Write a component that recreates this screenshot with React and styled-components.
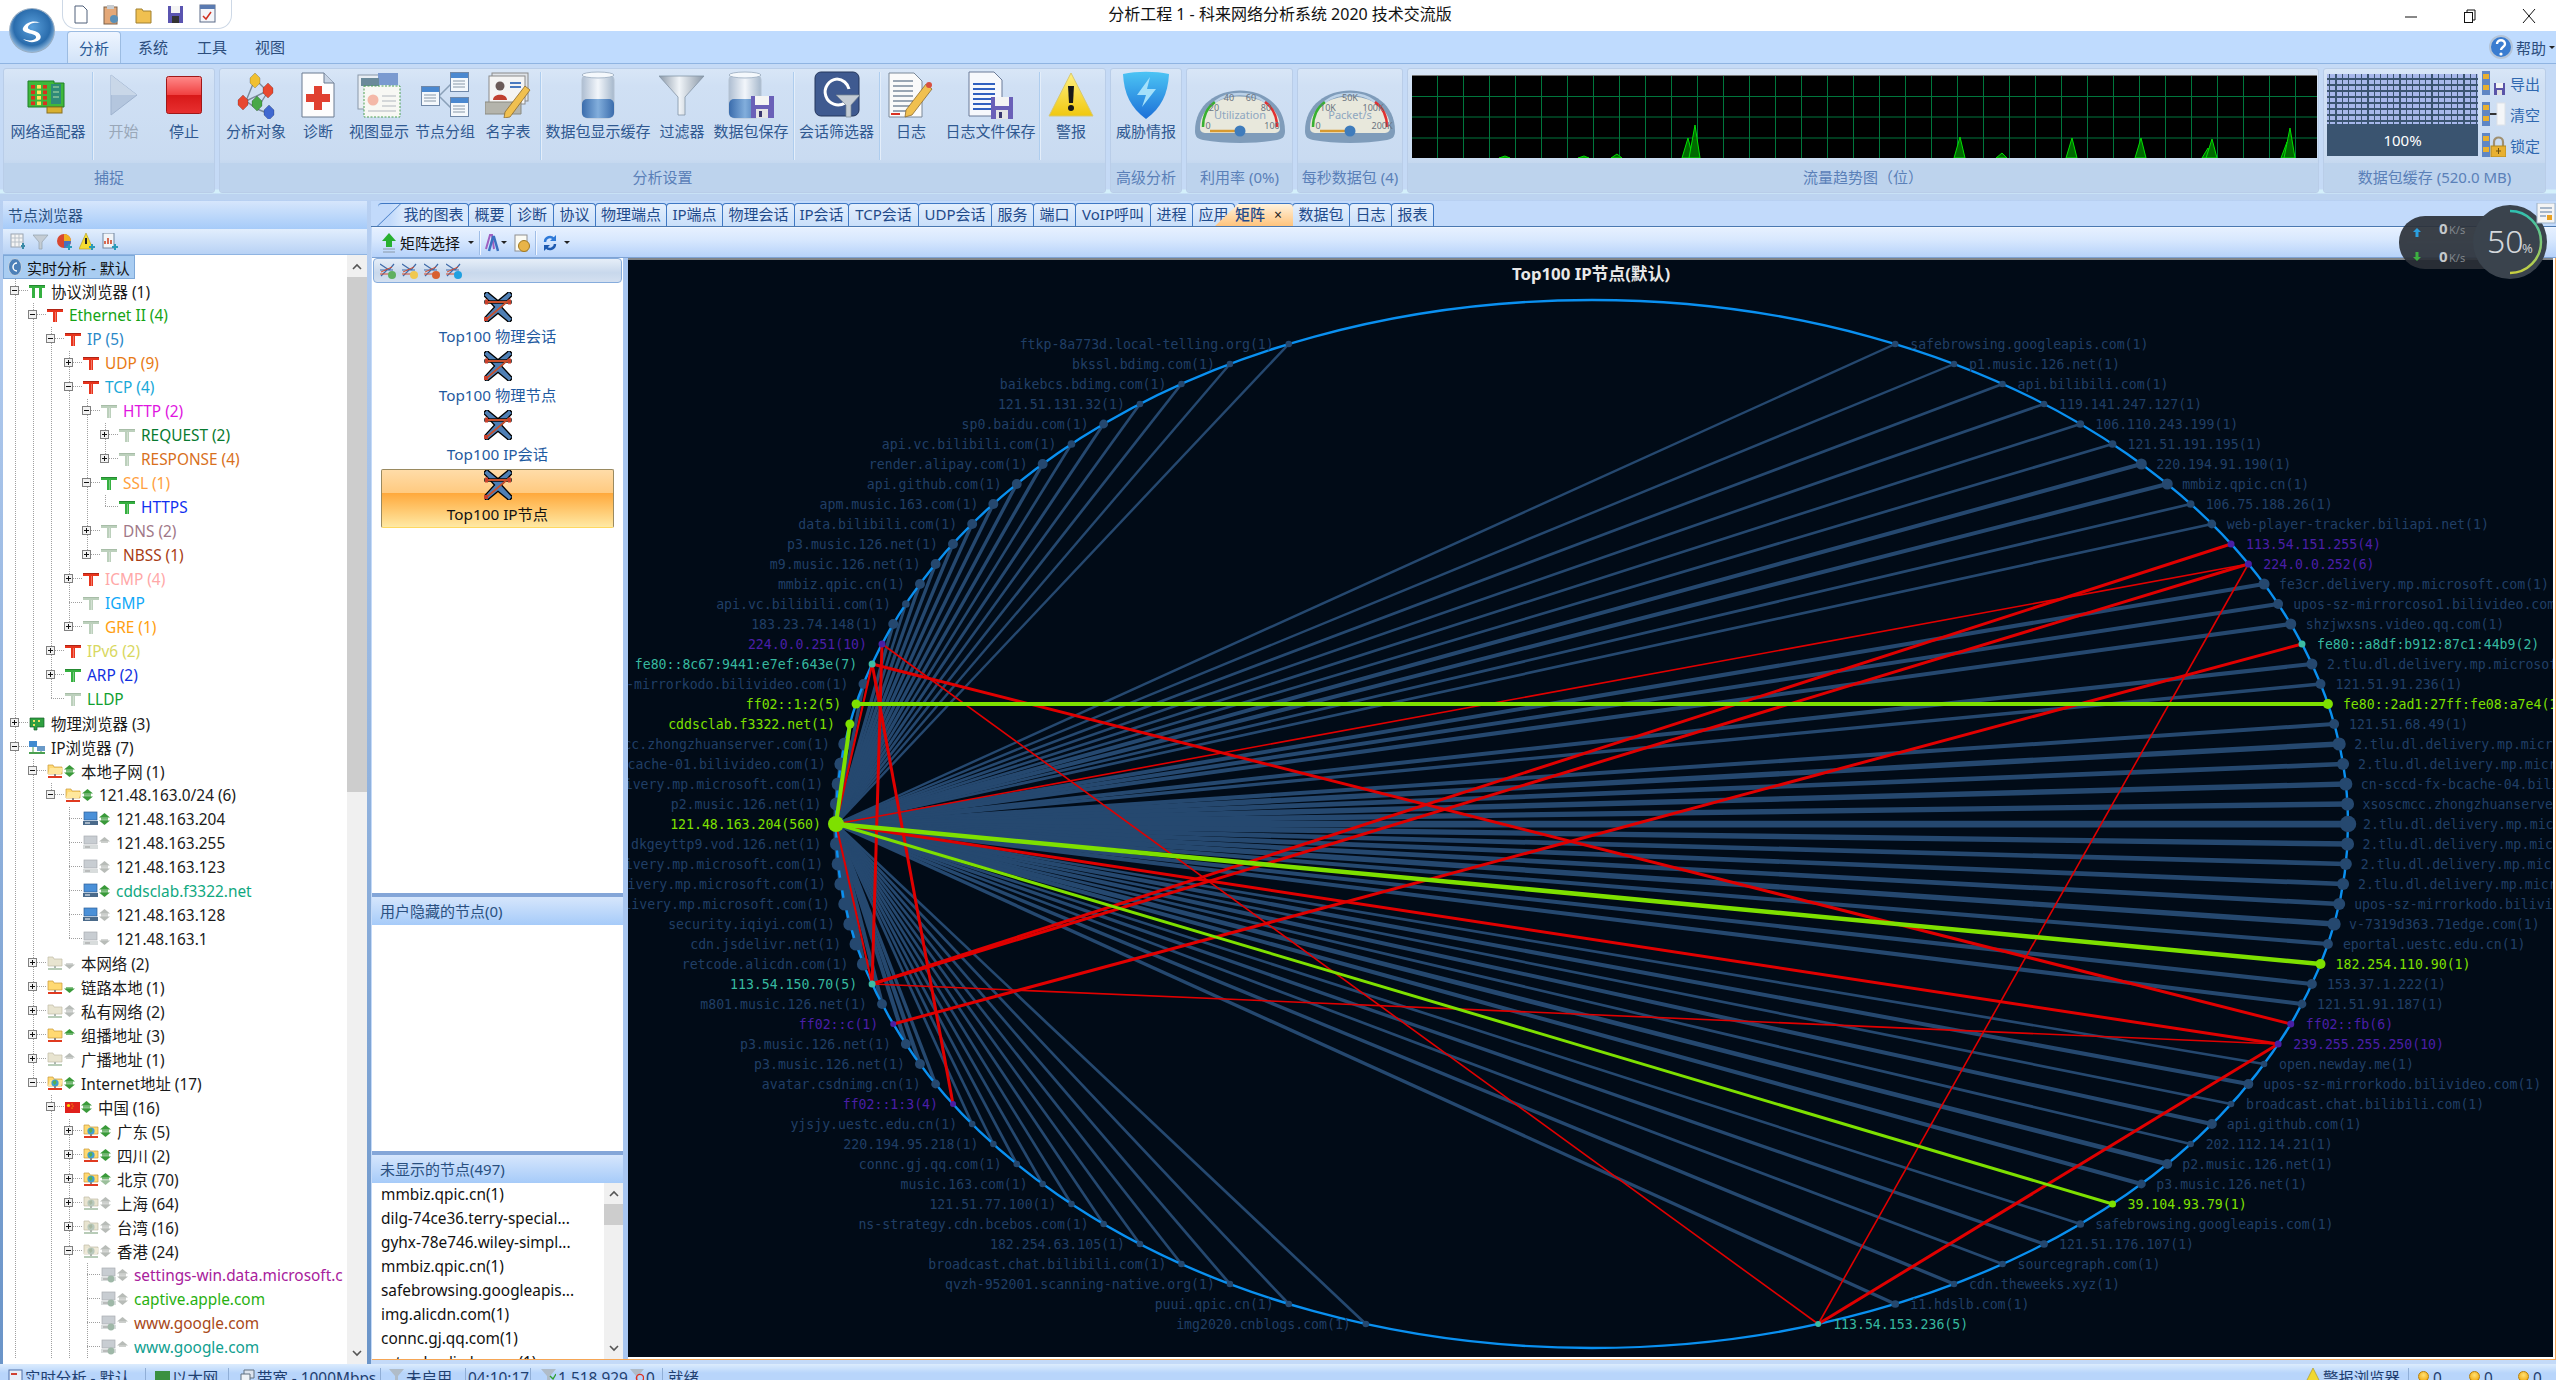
import React from 'react';
import styled, { createGlobalStyle } from 'styled-components';

const UI_FONT = '"Noto Sans", "Noto Sans CJK SC", sans-serif';

const GlobalStyle = createGlobalStyle`
  html, body { margin: 0; padding: 0; background: #bfdbfe; overflow: hidden; }
  * { box-sizing: border-box; }
`;

/* ---------- small drawn icons ---------- */

const IconSvg = styled.svg`
  display: block;
  flex: none;
`;

const Svg = ({ w, h, children }) => (
  <IconSvg width={w} height={h} viewBox={`0 0 ${w} ${h}`}>
    {children}
  </IconSvg>
);

const PipeIcon = ({ c = '#e8341c', s = '#8a1a10', double }) => (
  <Svg w={16} h={15}>
    <rect x="0" y="1" width="16" height="3" fill={c} />
    <rect x="0" y="1" width="16" height="1" fill={s} opacity="0.6" />
    {double ? (
      <>
        <rect x="3" y="4" width="3" height="10" fill={c} />
        <rect x="10" y="4" width="3" height="10" fill={c} />
      </>
    ) : (
      <rect x="6" y="4" width="4" height="10" fill={c} />
    )}
    <rect x="8" y="4" width="1" height="10" fill="#fff" opacity="0.35" />
  </Svg>
);

const FolderIcon = ({ net, dim, open }) => (
  <Svg w={16} h={16}>
    <path d="M1 2h5l1 2h8v7H1z" fill={dim ? '#e8e4d0' : '#ffd972'} stroke={dim ? '#c0bca8' : '#c99a38'} strokeWidth="0.7" />
    {open && <path d="M3 5h13l-2 6H1z" fill={dim ? '#efe9d8' : '#ffe79c'} />}
    {net && <circle cx="8" cy="8" r="3.6" fill={dim ? '#b8c8bc' : '#3f9fd0'} />}
    {net && <path d="M5.5 7l3-2 1 3-2 2z" fill={dim ? '#a8b8a0' : '#58b048'} />}
    <rect x="7" y="11" width="2" height="2" fill={dim ? '#b0b8b0' : '#888'} />
    <rect x="1" y="13" width="14" height="2" fill={dim ? '#b8ccb8' : '#e03a20'} />
  </Svg>
);

const PcIcon = ({ dim, globe }) => (
  <Svg w={15} h={16}>
    <rect x="1" y="1" width="13" height="8" fill={dim ? '#c8cdd2' : '#4a90d8'} stroke={dim ? '#a8adb2' : '#2c5f98'} strokeWidth="0.7" />
    <rect x="0" y="10" width="15" height="4" fill={dim ? '#d8dcdc' : '#4a6a8a'} />
    <rect x="2" y="11.5" width="5" height="1" fill={dim ? '#999' : '#fff'} />
    {globe && <circle cx="10" cy="12" r="3.4" fill="#9fb8a8" />}
  </Svg>
);

const Arrows = ({ up = 'none', down = 'none' }) => (
  <Svg w={11} h={14}>
    {up !== 'none' && <path d="M5.5 1L11 5.5H0z" fill={up} />}
    {up !== 'none' && <rect x="2" y="5.5" width="7" height="1.2" fill={up} />}
    {down !== 'none' && <rect x="2" y="7.4" width="7" height="1.2" fill={down} />}
    {down !== 'none' && <path d="M5.5 13L11 8.6H0z" fill={down} />}
  </Svg>
);

const CnFlag = () => (
  <Svg w={15} h={11}>
    <rect width="15" height="11" fill="#e0201c" />
    <circle cx="3.5" cy="3.5" r="1.6" fill="#ffd800" />
    <circle cx="7" cy="2" r="0.6" fill="#ffd800" />
    <circle cx="8" cy="4" r="0.6" fill="#ffd800" />
    <circle cx="7" cy="6" r="0.6" fill="#ffd800" />
  </Svg>
);

const AdapterIcon = () => (
  <Svg w={44} h={48}>
    <path d="M2 10h26v2h10v24H2z" fill="#3fb83a" stroke="#1f7f28" />
    {[0, 1, 2, 3].map((r) =>
      [0, 1, 2].map((c) => (
        <rect key={`${r}${c}`} x={5 + c * 6} y={14 + r * 5.5} width="4" height="3.6" fill={c === 1 ? '#ffe25a' : '#d8321e'} />
      ))
    )}
    <rect x="25" y="13" width="10" height="20" fill="#2f8a78" />
    <path d="M27 16h6M27 21h6M27 26h6" stroke="#b8e0a8" />
    <rect x="21" y="36" width="15" height="6" fill="#d8b030" stroke="#8a7020" />
  </Svg>
);

const PlayIcon = () => (
  <Svg w={30} h={44}>
    <path d="M2 2l26 20L2 42z" fill="#b4c6de" stroke="#9fb3cf" />
    <path d="M2 2l26 20L2 22z" fill="#c9d7e8" />
  </Svg>
);

const StopIcon = () => (
  <Svg w={36} h={38}>
    <defs>
      <linearGradient id="stopg" x1="0" y1="0" x2="0" y2="1">
        <stop offset="0" stopColor="#ff8a8a" />
        <stop offset="0.5" stopColor="#f04040" />
        <stop offset="0.5" stopColor="#d81818" />
        <stop offset="1" stopColor="#e83030" />
      </linearGradient>
    </defs>
    <rect x="0.5" y="0.5" width="35" height="37" rx="2" fill="url(#stopg)" stroke="#a01818" />
  </Svg>
);

const Diamond = ({ x, y, c }) => (
  <path d={`M${x} ${y - 7}l5 5v5l-5 5-5-5v-5z`} fill={c} stroke="#0005" strokeWidth="0.6" />
);

const MoleculeIcon = () => (
  <Svg w={46} h={48}>
    <path d="M22 8L13 30M22 8l12 12M34 20L13 30M13 30l11 8M24 38l10-16M24 38l10 4" stroke="#7a8a9a" strokeWidth="1.4" fill="none" />
    <Diamond x={22} y={9} c="#f0c030" />
    <Diamond x={35} y={19} c="#e84830" />
    <Diamond x={10} y={31} c="#e84830" />
    <Diamond x={24} y={32} c="#48a848" />
    <Diamond x={36} y={41} c="#4068d0" />
  </Svg>
);

const DocCrossIcon = () => (
  <Svg w={36} h={46}>
    <path d="M2 1h22l10 10v34H2z" fill="#fdfdfd" stroke="#6a7a90" />
    <path d="M24 1v10h10" fill="#c8d4e4" stroke="#6a7a90" />
    <path d="M14 17h8v8h8v8h-8v8h-8v-8H6v-8h8z" transform="translate(0 -3)" fill="#e04030" />
  </Svg>
);

const ViewIcon = () => (
  <Svg w={46} h={46}>
    <rect x="2" y="3" width="32" height="34" fill="#e8eef4" stroke="#8a98a8" />
    <rect x="22" y="1" width="20" height="12" fill="#7a9ad0" />
    <rect x="5" y="6" width="18" height="8" fill="#6a8a9a" />
    <rect x="8" y="14" width="36" height="31" fill="#f8f8f4" stroke="#4aa050" strokeDasharray="2 1.5" />
    <circle cx="17" cy="28" r="5.5" fill="#f4b8a8" />
    <path d="M26 24h14M26 29h14M26 34h14M12 39h28" stroke="#c8ccd0" strokeWidth="1.5" />
  </Svg>
);

const NodeGroupIcon = () => (
  <Svg w={48} h={46}>
    <path d="M18 24L30 12M18 24L30 36" stroke="#8aa0b8" strokeWidth="1.5" />
    {[[0, 14], [29, 0], [29, 25]].map(([x, y]) => (
      <g key={x + y}>
        <rect x={x + 0.5} y={y + 0.5} width="18" height="19" fill="#f4f8fc" stroke="#7088a8" />
        <rect x={x + 1} y={y + 1} width="17" height="5" fill="#4a88d0" />
        <path d={`M${x + 3} ${y + 9}h12M${x + 3} ${y + 12}h12M${x + 3} ${y + 15}h12`} stroke="#8898a8" />
      </g>
    ))}
  </Svg>
);

const NameTableIcon = () => (
  <Svg w={46} h={46}>
    <rect x="7" y="1" width="36" height="28" fill="#dfe3e8" stroke="#8a8a8a" />
    <rect x="4" y="4" width="36" height="28" fill="#f4f4f4" stroke="#8a8a8a" />
    <circle cx="15" cy="14" r="4.5" fill="#6a5a58" />
    <path d="M8 28c0-7 14-7 14 0z" fill="#c04030" />
    <path d="M25 11h11M25 15h11" stroke="#4a7ac0" strokeWidth="2" />
    <path d="M0 30h36v12H0z" fill="#b4b4ac" stroke="#8a8a80" />
    <path d="M40 14l5 4-20 27-6 1 1-6z" fill="#f0c050" stroke="#8a6a30" strokeWidth="0.8" />
  </Svg>
);

const BeakerIcon = ({ save }) => {
  const x = save ? 2 : 8;
  const id = save ? 'beaks' : 'beakg';
  return (
    <Svg w={48} h={48}>
      <defs>
        <linearGradient id={id} x1="0" y1="0" x2="1" y2="0">
          <stop offset="0" stopColor="#aebed2" />
          <stop offset="0.5" stopColor="#f2f6fb" />
          <stop offset="1" stopColor="#a6b8cc" />
        </linearGradient>
        <linearGradient id={`${id}w`} x1="0" y1="0" x2="1" y2="0">
          <stop offset="0" stopColor="#3a6cac" />
          <stop offset="0.5" stopColor="#82aedc" />
          <stop offset="1" stopColor="#3a6cac" />
        </linearGradient>
      </defs>
      <rect x={x} y="3" width="32" height="44" rx="6" fill={`url(#${id})`} stroke="#b4c2d2" />
      <rect x={x} y="28" width="32" height="19" rx="5" fill={`url(#${id}w)`} />
      <ellipse cx={x + 16} cy="4" rx="16" ry="3" fill="#f4f8fc" stroke="#a8b8ca" />
      {save && (
        <g>
          <rect x="24" y="25" width="23" height="22" fill="#6a60b8" />
          <rect x="28" y="25" width="14" height="9" fill="#f4f4f4" />
          <rect x="29" y="38" width="12" height="9" fill="#e4e4e4" />
          <rect x="32" y="40" width="3" height="6" fill="#3a3870" />
        </g>
      )}
    </Svg>
  );
};

const FunnelIcon = () => (
  <Svg w={46} h={44}>
    <defs>
      <linearGradient id="fung" x1="0" y1="0" x2="1" y2="0">
        <stop offset="0" stopColor="#8a98a8" />
        <stop offset="0.45" stopColor="#f0f4f8" />
        <stop offset="1" stopColor="#8a98a8" />
      </linearGradient>
    </defs>
    <path d="M0 3h45L26 24v18h-7V24z" fill="url(#fung)" stroke="#8494a6" strokeWidth="0.8" />
  </Svg>
);

const SessionFilterIcon = () => (
  <Svg w={46} h={48}>
    <rect x="1" y="1" width="44" height="44" rx="6" fill="#3f5a90" stroke="#24365c" />
    <path d="M23 8a13 13 0 1 0 8 24" fill="none" stroke="#fff" strokeWidth="3" />
    <path d="M23 8a13 13 0 0 1 12 10" fill="none" stroke="#fff" strokeWidth="3" />
    <path d="M22 24h24L37 34v12h-5V34z" fill="#c4ccd4" stroke="#7a8694" strokeWidth="0.7" />
  </Svg>
);

const LogIcon = () => (
  <Svg w={46} h={46}>
    <path d="M1 1h25l8 8v36H1z" fill="#fafafa" stroke="#7a8898" />
    {[9, 14, 19, 24, 29, 34, 39].map((y) => (
      <path key={y} d={`M5 ${y}h20`} stroke="#9aa6b4" strokeWidth="2" />
    ))}
    <rect x="3" y="41" width="9" height="2" fill="#d83020" />
    <path d="M38 12l6 5-20 26-7 2 1-7z" fill="#f0c050" stroke="#8a6a30" strokeWidth="0.8" />
    <circle cx="41" cy="13" r="3" fill="#d85040" />
  </Svg>
);

const LogSaveIcon = () => (
  <Svg w={46} h={48}>
    <path d="M1 1h25l8 8v36H1z" fill="#f6f8fc" stroke="#6a7a98" />
    {[13, 18, 23, 28, 33, 38].map((y) => (
      <path key={y} d={`M5 ${y}h22`} stroke="#3060c0" strokeWidth="2" />
    ))}
    <rect x="23" y="26" width="22" height="22" fill="#6a60b8" />
    <rect x="27" y="26" width="14" height="9" fill="#f4f4f4" />
    <rect x="28" y="39" width="12" height="9" fill="#e4e4e4" />
    <rect x="31" y="41" width="3" height="6" fill="#3a3870" />
  </Svg>
);

const WarnIcon = () => (
  <Svg w={46} h={46}>
    <defs>
      <linearGradient id="warng" x1="0" y1="0" x2="0" y2="1">
        <stop offset="0" stopColor="#fff080" />
        <stop offset="1" stopColor="#f0c810" />
      </linearGradient>
    </defs>
    <path d="M23 1l22 43H1z" fill="url(#warng)" stroke="#d8c870" />
    <path d="M20 14h6l-1 17h-4z" fill="#181818" />
    <circle cx="23" cy="36" r="3" fill="#181818" />
  </Svg>
);

const ShieldIcon = () => (
  <Svg w={48} h={48}>
    <defs>
      <linearGradient id="shg" x1="0" y1="0" x2="0" y2="1">
        <stop offset="0" stopColor="#4cc4f4" />
        <stop offset="1" stopColor="#1c70d8" />
      </linearGradient>
    </defs>
    <path d="M1 3c14-3 32-3 46 0-1 20-8 34-23 45C9 37 2 23 1 3z" fill="url(#shg)" />
    <path d="M28 6L15 24h9l-4 12 14-18h-9z" fill="#a4e0fa" />
  </Svg>
);

const TickText = styled.text`
  font: 9px ${UI_FONT};
  fill: #6a7480;
  text-anchor: middle;
`;

const GaugeTitle = styled.text`
  font: 11px ${UI_FONT};
  fill: #8ea6c0;
  text-anchor: middle;
`;

const Gauge = ({ ticks, title }) => (
  <Svg w={98} h={66}>
    <path d="M4 48C4 -6 94 -6 94 48c0 6-3 8-8 9-12 2-24 3-37 3s-26-1-37-3c-5-1-8-3-8-9z" fill="#7f9cba" />
    <path d="M9 45C9 3 89 3 89 45c0 4-3 5-6 5H15c-3 0-6-1-6-5z" fill="#e8e8dc" />
    <path d="M12 44C12 32 17 24 24 19" fill="none" stroke="#38b030" strokeWidth="2.5" />
    <path d="M24 19c6-5 14-8 25-8s19 3 25 8" fill="none" stroke="#bcd2e8" strokeWidth="2.5" />
    <path d="M74 19c7 5 12 13 12 25" fill="none" stroke="#e03030" strokeWidth="2.5" />
    {ticks.map(([t, x, y]) => (
      <TickText key={t} x={x} y={y}>{t}</TickText>
    ))}
    <GaugeTitle x="49" y="36">{title}</GaugeTitle>
    <path d="M19 48h30" stroke="#d89a30" strokeWidth="2.5" />
    <circle cx="49" cy="48" r="5.5" fill="#3f7cbc" />
  </Svg>
);

const MatrixIcon = () => (
  <Svg w={28} h={30}>
    <g fill="none" strokeLinecap="square">
      <path d="M3 3l11 9L25 3M3 27l11-9 11 9M3 3l22 24M25 3L3 27" stroke="#000" strokeWidth="6.5" />
      <path d="M3 3l11 9L25 3M3 27l11-9 11 9M3 3l22 24M25 3L3 27" stroke="#4f7fb4" strokeWidth="3.8" />
      <path d="M2 10h24" stroke="#000" strokeWidth="3.4" />
      <path d="M2 10h24M4 26L24 9" stroke="#c8502c" strokeWidth="1.8" />
    </g>
    <rect x="0" y="25" width="4" height="4" fill="#c8402c" />
    <rect x="1" y="7.5" width="3" height="5" fill="#c8402c" />
    <rect x="24" y="7.5" width="3" height="5" fill="#c8402c" />
  </Svg>
);

const MiniMatrix = ({ badge }) => (
  <Svg w={16} h={16}>
    <path d="M0 1l9 6 5-6M1 13l6-6M0 7h13" stroke="#3f6aa8" strokeWidth="1.2" fill="none" />
    <path d="M1 9l11-5M0 11h10" stroke="#d85030" strokeWidth="1" />
    <circle cx="12" cy="12" r="4" fill={badge} />
  </Svg>
);

const ToolIcon = ({ kind }) => (
  <Svg w={16} h={18}>
    {kind === 'grid' && (
      <g>
        <rect x="1" y="1" width="12" height="13" fill="#f4f4f4" stroke="#9aa4b0" />
        <path d="M1 5h12M1 9h12M5 1v13M9 1v13" stroke="#b8c0c8" />
        <path d="M11 12h4v2h-4zM12 10h2v6h-2z" fill="#3a8aa8" />
      </g>
    )}
    {kind === 'funnel' && <path d="M0 2h15L9 9v7H6V9z" fill="#c4ccd4" stroke="#94a0ac" strokeWidth="0.7" />}
    {kind === 'pie' && (
      <g>
        <circle cx="8" cy="8" r="7" fill="#d84830" />
        <path d="M8 8V1a7 7 0 0 1 7 7z" fill="#f0b020" />
        <path d="M8 8h7a7 7 0 0 1-7 7z" fill="#4870c0" />
        <path d="M10 13h6v2h-6zM12 11h2v6h-2z" fill="#2a9ab8" />
      </g>
    )}
    {kind === 'warn' && (
      <g>
        <path d="M7 0l7 16H0z" fill="#f4dc30" stroke="#b09820" strokeWidth="0.6" />
        <rect x="6" y="5" width="2" height="6" fill="#222" />
        <path d="M10 13h6v2h-6zM12 11h2v6h-2z" fill="#2a9ab8" />
      </g>
    )}
    {kind === 'report' && (
      <g>
        <rect x="1" y="0" width="11" height="15" fill="#f0f4f8" stroke="#7488a0" />
        <path d="M3 11V8M6 11V5M9 11V7" stroke="#d04828" strokeWidth="1.6" />
        <path d="M10 13h6v2h-6zM12 11h2v6h-2z" fill="#2a9ab8" />
      </g>
    )}
  </Svg>
);

const BufferActionIcon = ({ kind }) => (
  <Svg w={24} h={24}>
    <rect x="0" y="0" width="8" height="24" fill="#5f86c4" />
    <rect x="1" y="3" width="6" height="5" fill="#e8b030" />
    <rect x="1" y="14" width="6" height="5" fill="#e8b030" />
    {kind === 'save' && (
      <g>
        <rect x="12" y="12" width="11" height="12" fill="#5a54a8" />
        <rect x="14" y="12" width="7" height="5" fill="#f4f4f4" />
        <rect x="15" y="19" width="5" height="5" fill="#e0e0e0" />
      </g>
    )}
    {kind === 'clear' && (
      <g>
        <path d="M8 12h7" stroke="#333" strokeWidth="2" />
        <rect x="15" y="1" width="8" height="22" fill="#f4f6f8" stroke="#dde2e8" />
      </g>
    )}
    {kind === 'lock' && (
      <g>
        <path d="M12 13V9c0-6 9-6 9 0v4" fill="none" stroke="#a09070" strokeWidth="2.2" />
        <rect x="9" y="13" width="15" height="11" fill="#e8b030" stroke="#b08820" />
        <path d="M16.5 15v6M14 18h5" stroke="#6a5010" />
      </g>
    )}
  </Svg>
);

const Chevron = ({ down }) => (
  <Svg w={10} h={7}>
    <path d={down ? 'M1 1l4 4 4-4' : 'M1 6l4-4 4 4'} fill="none" stroke="#555" strokeWidth="1.6" />
  </Svg>
);

const Caret = styled.span`
  width: 0;
  height: 0;
  flex: none;
  border-left: 3px solid transparent;
  border-right: 3px solid transparent;
  border-top: 3px solid #222;
  margin: ${(p) => p.$m || '0'};
`;

/* ---------- title bar ---------- */

const Page = styled.div`
  position: relative;
  width: 2556px;
  height: 1380px;
  overflow: hidden;
  display: flex;
  flex-direction: column;
  background: #bfdbfe;
  font-family: ${UI_FONT};
  font-size: 15px;
`;

const TitleBar = styled.header`
  height: 31px;
  flex: none;
  background: #fff;
  display: flex;
  align-items: center;
`;

const QuickAccess = styled.div`
  margin-left: 62px;
  width: 170px;
  height: 29px;
  flex: none;
  align-self: flex-start;
  display: flex;
  align-items: center;
  gap: 15px;
  padding-left: 11px;
  border: 1px solid #cdd8e6;
  border-top: none;
  border-radius: 0 0 14px 14px;
`;

const TitleText = styled.div`
  flex: 1;
  padding-right: 68px;
  margin-top: -4px;
  text-align: center;
  font-size: 16px;
  line-height: 22px;
  color: #111;
`;

const WindowButtons = styled.div`
  width: 160px;
  flex: none;
  display: flex;
  align-items: center;
  justify-content: space-between;
  padding: 0 20px 0 8px;
`;

const LogoOrb = styled.div`
  position: absolute;
  left: 9px;
  top: 8px;
  width: 46px;
  height: 45px;
  border-radius: 50%;
  z-index: 3;
  display: flex;
  align-items: center;
  justify-content: center;
  background: radial-gradient(circle at 50% 42%, #5aa0dc 0, #2a6cac 55%, #8db6dc 74%, #eef4fa 100%);
  border: 1px solid #98aec4;
`;

/* ---------- ribbon ---------- */

const TabRow = styled.nav`
  height: 33px;
  flex: none;
  background: #bfdbfe;
  display: flex;
  align-items: flex-end;
  padding-left: 67px;
  border-bottom: 1px solid #8fb4e2;
`;

const RibbonTab = styled.div`
  width: ${(p) => p.$w}px;
  height: 32px;
  text-align: center;
  line-height: 32px;
  color: #2c4d7c;
  ${(p) =>
    p.$active &&
    `background: linear-gradient(#eef5ff, #d2e3f8);
     border: 1px solid #9cbce2;
     border-bottom: none;
     border-radius: 4px 4px 0 0;
     color: #2a5a96;`}
`;

const HelpBox = styled.div`
  margin-left: auto;
  align-self: center;
  display: flex;
  align-items: center;
  gap: 3px;
  color: #2c4d7c;
  padding-right: 1px;
`;

const Ribbon = styled.section`
  height: 136px;
  flex: none;
  padding: 4px 0 0 3px;
  display: flex;
  gap: 4px;
  background: linear-gradient(#c5daf6 0, #c5daf6 125px, #d4f0fb 126px, #d4f0fb 129px, #bcd3f0 130px);
`;

const RibbonGroup = styled.div`
  width: ${(p) => p.$w}px;
  height: 125px;
  flex: none;
  display: flex;
  flex-direction: column;
  border: 1px solid #b9cde8;
  border-radius: 3px;
  background: linear-gradient(#d8e6f7, #d0e0f4 14%, #c9dbf1 90px, #c4d7ef 95px);
`;

const GroupBody = styled.div`
  height: 94px;
  flex: none;
  display: flex;
  align-items: flex-start;
`;

const GroupLabel = styled.div`
  flex: 1;
  background: #bdd3ed;
  color: #5a80b8;
  text-align: center;
  line-height: 29px;
  border-radius: 0 0 3px 3px;
  white-space: nowrap;
`;

const RibbonItem = styled.div`
  width: ${(p) => p.$w}px;
  flex: none;
  height: 92px;
  padding-top: 2px;
  display: flex;
  flex-direction: column;
  align-items: center;
  color: ${(p) => (p.$off ? '#99a7b8' : '#2f5890')};
`;

const ItemIcon = styled.div`
  height: 48px;
  display: flex;
  align-items: center;
  justify-content: center;
`;

const ItemLabel = styled.div`
  margin-top: 1px;
  line-height: 22px;
  white-space: nowrap;
`;

const GaugeBox = styled.div`
  width: 100%;
  padding-top: 14px;
  display: flex;
  justify-content: center;
`;

const RibbonSep = styled.div`
  width: 1px;
  height: 88px;
  margin-top: 3px;
  flex: none;
  background: #aecdee;
  box-shadow: 1px 0 0 #e4eefa;
`;

const ChartBox = styled.div`
  margin: 6px 0 0 4px;
  border-top: 1px solid #777;
`;

const BufferWrap = styled.div`
  display: flex;
  padding: 5px 0 0 3px;
  gap: 4px;
`;

const BufferGrid = styled.div`
  width: 151px;
  height: 82px;
  display: flex;
  flex-direction: column;
  background: #3a5470;
`;

const BufferDots = styled.div`
  height: 50px;
  background:
    repeating-linear-gradient(90deg, transparent 0 2px, #3a5470 2px 3.2px, transparent 3.2px 6.4px),
    repeating-linear-gradient(#a7b7ea 0 4px, #3a5470 4px 6px);
`;

const BufferPct = styled.div`
  flex: 1;
  color: #fff;
  text-align: center;
  line-height: 32px;
`;

const BufferActions = styled.div`
  display: flex;
  flex-direction: column;
  gap: 7px;
  margin-top: -3px;
`;

const BufferAction = styled.div`
  display: flex;
  align-items: center;
  height: 24px;
  gap: 4px;
  color: #2f68b0;
`;

/* ---------- workspace ---------- */

const Workspace = styled.div`
  position: relative;
  height: 1164px;
  flex: none;
  display: flex;
  padding-left: 3px;
  padding-top: 1px;
  background: linear-gradient(#b8d0f2, #6a94c8);
`;

const LeftPanel = styled.aside`
  width: 364px;
  flex: none;
  display: flex;
  flex-direction: column;
  background: #fff;
`;

const PanelHeader = styled.div`
  height: 28px;
  flex: none;
  padding-left: ${(p) => p.$pl || 5}px;
  line-height: 28px;
  color: #2a5080;
  background: linear-gradient(#d6e6fc, #a6cbf9);
`;

const PanelTools = styled.div`
  height: 26px;
  flex: none;
  display: flex;
  align-items: center;
  gap: 7px;
  padding-left: 7px;
  background: linear-gradient(#e2eefd, #b8d2f5);
  border-bottom: 1px solid #8fb4e2;
`;

const TreeArea = styled.div`
  flex: 1;
  display: flex;
  min-height: 0;
`;

const TreeColumn = styled.div`
  flex: 1;
  min-width: 0;
  overflow: hidden;
`;

const SessionRow = styled.div`
  width: 132px;
  height: 24px;
  display: flex;
  align-items: center;
  gap: 5px;
  padding-left: 4px;
  background: #a9cdf2;
  border: 1px solid #7ea8d8;
  white-space: nowrap;
  color: #111;
`;

const Scrollbar = styled.div`
  width: ${(p) => p.$w}px;
  flex: none;
  display: flex;
  flex-direction: column;
  align-items: center;
  background: #f0f0f0;
`;

const ScrollCap = styled.div`
  height: ${(p) => p.$h}px;
  flex: none;
  display: flex;
  align-items: center;
  justify-content: center;
`;

const ScrollThumb = styled.div`
  width: 100%;
  height: ${(p) => p.$h}px;
  flex: none;
  background: #cdcdcd;
`;

const ScrollRest = styled.div`
  flex: 1;
`;

const TreeRow = styled.div`
  height: 24px;
  display: flex;
  align-items: center;
  padding-left: 3px;
  font-size: 15.4px;
  white-space: nowrap;
  color: ${(p) => p.$c || '#1a1a1a'};
`;

const dots = '#a0a0a0';

const Guide = styled.span`
  width: 18px;
  height: 24px;
  flex: none;
  ${(p) =>
    p.$on &&
    `background: repeating-linear-gradient(${dots} 0 1px, transparent 1px 2px) 8.5px 0 / 1px 100% no-repeat;`}
`;

const Connector = styled.span`
  width: 23px;
  height: 24px;
  flex: none;
  display: flex;
  align-items: center;
  padding-left: 4px;
  background:
    repeating-linear-gradient(${dots} 0 1px, transparent 1px 2px) 8.5px 0 / 1px ${(p) => (p.$last ? '50%' : '100%')} no-repeat,
    repeating-linear-gradient(90deg, ${dots} 0 1px, transparent 1px 2px) 9px 11px / 14px 1px no-repeat;
`;

const Expander = styled.span`
  width: 9px;
  height: 9px;
  margin-top: -1px;
  flex: none;
  position: relative;
  background: #f2f2f2;
  border: 1px solid #808080;
  &::before {
    content: '';
    position: absolute;
    left: 1px;
    top: 3px;
    width: 5px;
    height: 1px;
    background: #111;
  }
  ${(p) =>
    p.$plus &&
    `&::after {
      content: '';
      position: absolute;
      left: 3px;
      top: 1px;
      width: 1px;
      height: 5px;
      background: #111;
    }`}
`;

const TreeIcons = styled.span`
  display: flex;
  align-items: center;
  gap: 1px;
  flex: none;
  margin-right: 6px;
`;

const MainPane = styled.main`
  flex: 1;
  min-width: 0;
  margin-left: 4px;
  display: flex;
  flex-direction: column;
  background: #c4daf8;
`;

const TabStrip = styled.div`
  height: 26px;
  flex: none;
  display: flex;
  align-items: flex-end;
  padding-left: 7px;
  padding-top: 3px;
  background: #c2dafb;
  border-bottom: 1px solid #4a78b0;
`;

const DocTab = styled.div`
  position: relative;
  width: ${(p) => p.$w}px;
  height: 23px;
  flex: none;
  line-height: 21px;
  text-align: center;
  white-space: nowrap;
  color: #1f4a8a;
  background: linear-gradient(#e4effd, #c9dffa);
  border: 1px solid #3f78c4;
  border-bottom: none;
  border-radius: 4px 4px 0 0;
  margin-right: -1px;
  ${(p) =>
    p.$slant &&
    `border-left: none;
     padding-left: 21px;
     background: linear-gradient(90deg, transparent 0, transparent 12px, #d8e8fc 24px);
     &::before {
       content: '';
       position: absolute;
       left: 11px;
       top: -1px;
       height: 23px;
       width: 1px;
       background: #3f78c4;
       transform: skewX(-46deg);
     }`}
  ${(p) =>
    p.$active &&
    `z-index: 1;
     margin-left: -19px;
     padding-left: 9px;
     font-weight: 500;
     border: none;
     border-top: 1px solid #3f78c4;
     clip-path: polygon(24px 0, 100% 0, 100% 100%, 0 100%);
     background: linear-gradient(#fff3df, #ffc37c);`}
`;

const TabClose = styled.span`
  margin-left: 9px;
  color: #222;
  font-size: 14px;
  font-weight: 400;
`;

const MainTools = styled.div`
  height: 31px;
  flex: none;
  margin-left: 1px;
  display: flex;
  align-items: center;
  padding-left: 10px;
  color: #111;
  background: linear-gradient(#e6f0ff, #d8e8fe 40%, #b6d2fa);
  border-top: 1px solid #f0f6ff;
  border-bottom: 1px solid #7fa3d4;
`;

const ToolLabel = styled.span`
  margin-left: 4px;
  white-space: nowrap;
`;

const ToolSep = styled.span`
  width: 1px;
  height: 24px;
  flex: none;
  background: #9fbde6;
  box-shadow: 1px 0 0 #f4f8ff;
  margin: ${(p) => p.$m};
`;

const MainBody = styled.div`
  flex: 1;
  min-height: 0;
  display: flex;
  margin-left: 1px;
  margin-bottom: 4px;
  border-bottom: 1px solid #f5a656;
`;

const SideColumn = styled.div`
  width: 251px;
  flex: none;
  display: flex;
  flex-direction: column;
  background: #fff;
`;

const SideTools = styled.div`
  height: 25px;
  flex: none;
  margin: 0 1px;
  display: flex;
  align-items: center;
  gap: 6px;
  padding-left: 6px;
  border: 1px solid #86acdc;
  border-radius: 4px;
  background: linear-gradient(#e6eef8, #c8d8ec 60%, #d4e0f0);
`;

const MatrixList = styled.div`
  height: 610px;
  flex: none;
  padding: 9px 9px 0 9px;
  display: flex;
  flex-direction: column;
`;

const MatrixItem = styled.div`
  height: 59px;
  flex: none;
  display: flex;
  flex-direction: column;
  align-items: center;
  font-size: 15.3px;
  color: ${(p) => (p.$on ? '#111' : '#1f5aa0')};
  white-space: nowrap;
  ${(p) =>
    p.$on &&
    `background: linear-gradient(#ffdca8, #ffca80 40%, #ffa93c 41%, #ffe9a4);
     border: 1px solid #9a8a60;
     border-bottom-color: #ffd860;
     border-radius: 2px;`}
`;

const MatrixLabel = styled.div`
  line-height: 22px;
  margin-top: 3px;
`;

const SideSep = styled.div`
  height: 4px;
  flex: none;
  background: #84a6d8;
`;

const HiddenArea = styled.div`
  height: 226px;
  flex: none;
`;

const RestList = styled.div`
  flex: 1;
  min-height: 0;
  display: flex;
  overflow: hidden;
`;

const RestRows = styled.div`
  flex: 1;
  min-width: 0;
  padding-left: 9px;
`;

const RestRow = styled.div`
  height: 24px;
  line-height: 24px;
  font-size: 15.4px;
  white-space: nowrap;
  color: #111;
`;

const Gutter = styled.div`
  width: 5px;
  flex: none;
  background: #a8c6f0;
`;

const CanvasWrap = styled.div`
  flex: 1;
  min-width: 0;
  display: flex;
  flex-direction: column;
  background: #fff;
  padding: 0 2px 2px 0;
  border-right: 1px solid #f5a656;
`;

const MatrixSvg = styled.svg`
  display: block;
  flex: 1;
  width: 100%;
  min-height: 0;
  background: #010b17;
  border-top: 2px solid #808488;
`;

const NodeLabel = styled.text`
  font: 13.2px "DejaVu Sans Mono", monospace;
  fill: ${(p) => p.$c};
`;

const CanvasTitle = styled.text`
  font: 700 16.8px ${UI_FONT};
  fill: #e8e8e8;
  text-anchor: middle;
`;

const MonitorWidget = styled.div`
  position: absolute;
  left: 2399px;
  top: 3px;
  z-index: 4;
`;

const MonitorSmall = styled.text`
  font: 700 15px ${UI_FONT};
  fill: #c4c8cc;
`;

const MonitorUnit = styled.text`
  font: 11px ${UI_FONT};
  fill: #80868c;
`;

const MonitorPct = styled.text`
  font: 300 32px ${UI_FONT};
  fill: #d4d8dc;
`;

const MonitorPctSign = styled.text`
  font: 13px ${UI_FONT};
  fill: #c8ccd0;
`;

const StatusBar = styled.footer`
  height: 30px;
  flex: none;
  display: flex;
  padding-top: 4px;
  font-size: 15.4px;
  color: #1f3f70;
  background: linear-gradient(#dcecfd, #b8d5fb 9px);
  white-space: nowrap;
`;

const StatusItem = styled.div`
  display: flex;
  align-items: flex-start;
  gap: ${(p) => p.$gap ?? 2}px;
  width: ${(p) => (p.$w ? `${p.$w}px` : 'auto')};
  flex: none;
  padding: 0 ${(p) => p.$pr ?? 0}px 0 ${(p) => p.$pl ?? 0}px;
  height: 24px;
  line-height: 21px;
  border-right: ${(p) => (p.$plain ? 'none' : '1px solid #90aed6')};
  margin-left: ${(p) => p.$ml || 0};
`;

const Bulb = styled.span`
  width: 11px;
  height: 11px;
  margin-top: 3px;
  flex: none;
  border-radius: 50%;
  background: radial-gradient(circle at 50% 35%, #ffe070, #f0a000);
  border: 1px solid #b88008;
`;

/* ---------- data ---------- */

const RED = ['#e8341c', '#8a1a10'];
const GRN = ['#35b040', '#1a7028'];
const GRY = ['#bcd0bc', '#9ab09a'];

const P = (name, level, c, col, extra) => ({ kind: 'pipe', name, level, c, col, ...extra });
const F = (name, level, extra) => ({ kind: 'folder', name, level, ...extra });
const H = (name, level, extra) => ({ kind: 'pc', name, level, ...extra });

const G = '#3a9a3a';
const D = '#b8bcb8';

const treeRows = [
  { kind: 'pipe', name: '协议浏览器 (1)', level: 0, col: GRN, dbl: true, open: true, more: true },
  P('Ethernet II (4)', 1, '#14a314', RED, { open: true, more: true }),
  P('IP (5)', 2, '#2a88c8', RED, { open: true }),
  P('UDP (9)', 3, '#e87a14', RED, { plus: true }),
  P('TCP (4)', 3, '#18a8d8', RED, { open: true }),
  P('HTTP (2)', 4, '#e014e0', GRY, { open: true }),
  P('REQUEST (2)', 5, '#087a30', GRY, { plus: true }),
  P('RESPONSE (4)', 5, '#d8701c', GRY, { plus: true }),
  P('SSL (1)', 4, '#ffa040', GRN, { open: true }),
  P('HTTPS', 5, '#1030f0', GRN),
  P('DNS (2)', 4, '#a07888', GRY, { plus: true }),
  P('NBSS (1)', 4, '#a83c14', GRY, { plus: true }),
  P('ICMP (4)', 3, '#ffa8a8', RED, { plus: true }),
  P('IGMP', 3, '#10a8f8', GRY),
  P('GRE (1)', 3, '#ffa010', GRY, { plus: true }),
  P('IPv6 (2)', 2, '#d8d860', RED, { plus: true }),
  P('ARP (2)', 2, '#1030e0', GRN, { plus: true }),
  P('LLDP', 2, '#10a030', GRY),
  { kind: 'card', name: '物理浏览器 (3)', level: 0, plus: true },
  { kind: 'ipnet', name: 'IP浏览器 (7)', level: 0, open: true, more: true },
  F('本地子网 (1)', 1, { open: true, up: G, down: G, folderOpen: true }),
  F('121.48.163.0/24 (6)', 2, { open: true, up: G, down: G, folderOpen: true }),
  H('121.48.163.204', 3, { up: G, down: G }),
  H('121.48.163.255', 3, { dim: true, up: D }),
  H('121.48.163.123', 3, { dim: true, up: D, down: D }),
  H('cddsclab.f3322.net', 3, { c: '#10a880', up: G, down: G }),
  H('121.48.163.128', 3, { up: D, down: D }),
  H('121.48.163.1', 3, { dim: true, down: D }),
  F('本网络 (2)', 1, { plus: true, dim: true, down: D }),
  F('链路本地 (1)', 1, { plus: true, down: G }),
  F('私有网络 (2)', 1, { plus: true, dim: true, up: D, down: D }),
  F('组播地址 (3)', 1, { plus: true, up: G }),
  F('广播地址 (1)', 1, { plus: true, dim: true, up: D }),
  F('Internet地址 (17)', 1, { open: true, up: G, down: G, net: true, folderOpen: true }),
  { kind: 'flag', name: '中国 (16)', level: 2, open: true, up: G, down: G, more: true },
  F('广东 (5)', 3, { plus: true, up: G, down: G, net: true }),
  F('四川 (2)', 3, { plus: true, up: G, down: G, net: true }),
  F('北京 (70)', 3, { plus: true, up: G, down: '#9bbf9b', net: true }),
  F('上海 (64)', 3, { plus: true, dim: true, up: D, down: D, net: true }),
  F('台湾 (16)', 3, { plus: true, dim: true, up: D, down: D, net: true }),
  F('香港 (24)', 3, { open: true, dim: true, up: D, down: D, net: true, folderOpen: true, more: true }),
  H('settings-win.data.microsoft.c', 4, { c: '#a8209c', dim: true, globe: true, up: D, down: D, more: true }),
  H('captive.apple.com', 4, { c: '#28b010', dim: true, globe: true, up: D, down: D, more: true }),
  H('www.google.com', 4, { c: '#a84818', dim: true, globe: true, up: D, more: true }),
  H('www.google.com', 4, { c: '#10a090', dim: true, globe: true, up: D, more: true }),
];

const hasNext = (i) => {
  const r = treeRows[i];
  if (r.more) return true;
  for (let j = i + 1; j < treeRows.length; j++) {
    if (treeRows[j].level < r.level) return false;
    if (treeRows[j].level === r.level) return true;
  }
  return false;
};

const ancestorLines = (i) => {
  const lines = [];
  const target = treeRows[i].level;
  for (let l = 0; l < target; l++) {
    let idx = i - 1;
    while (idx >= 0 && treeRows[idx].level !== l) {
      if (treeRows[idx].level < l) break;
      idx--;
    }
    lines.push(idx >= 0 && treeRows[idx].level === l ? hasNext(idx) : false);
  }
  return lines;
};

const ribbonTabs = [['分析', 54, true], ['系统', 64], ['工具', 54], ['视图', 62]];

const docTabs = [
  ['我的图表', 91, 'slant'], ['概要', 43], ['诊断', 44], ['协议', 43], ['物理端点', 72], ['IP端点', 57],
  ['物理会话', 73], ['IP会话', 55], ['TCP会话', 71], ['UDP会话', 74], ['服务', 43], ['端口', 43],
  ['VoIP呼叫', 76], ['进程', 43], ['应用', 43],
];

const docTabsAfter = [['数据包', 58], ['日志', 43], ['报表', 43]];

const restNodes = [
  'mmbiz.qpic.cn(1)', 'dilg-74ce36.terry-special...', 'gyhx-78e746.wiley-simpl...', 'mmbiz.qpic.cn(1)',
  'safebrowsing.googleapis...', 'img.alicdn.com(1)', 'connc.gj.qq.com(1)', 'retcode.alicdn.com(1)',
];

const matrixItems = ['Top100 物理会话', 'Top100 物理节点', 'Top100 IP会话', 'Top100 IP节点'];

/* node = [label, dot radius, line width, kind] */
const leftNodes = [
  ['ftkp-8a773d.local-telling.org(1)', 3, 1.8], ['bkssl.bdimg.com(1)', 3, 1.8], ['baikebcs.bdimg.com(1)', 3, 2],
  ['121.51.131.32(1)', 3, 2], ['sp0.baidu.com(1)', 4, 2.2], ['api.vc.bilibili.com(1)', 3.5, 2],
  ['render.alipay.com(1)', 4.5, 2.5], ['api.github.com(1)', 4.5, 2.5], ['apm.music.163.com(1)', 4.5, 2.5],
  ['data.bilibili.com(1)', 4.5, 2.5], ['p3.music.126.net(1)', 4.5, 2.5], ['m9.music.126.net(1)', 4.5, 2.5],
  ['mmbiz.qpic.cn(1)', 4.5, 2.5], ['api.vc.bilibili.com(1)', 3.5, 2], ['183.23.74.148(1)', 4.5, 2.5],
  ['224.0.0.251(10)', 3.5, 0, 'purple'], ['fe80::8c67:9441:e7ef:643e(7)', 3.5, 0, 'teal'],
  ['upos-sz-mirrorkodo.bilivideo.com(1)', 4.5, 2.5], ['ff02::1:2(5)', 4.5, 0, 'green'],
  ['cddsclab.f3322.net(1)', 4.5, 0, 'green'], ['xsoscmcc.zhongzhuanserver.com(1)', 6, 4],
  ['upos-cache-01.bilivideo.com(1)', 6, 4], ['fe3cr.delivery.mp.microsoft.com(1)', 6, 4], ['p2.music.126.net(1)', 6, 4],
  ['121.48.163.204(560)', 8, 0, 'green'], ['dkgeyttp9.vod.126.net(1)', 6, 4], ['2.tlu.delivery.mp.microsoft.com(1)', 6, 4],
  ['2.tlu.delivery.mp.microsoft.com(1)', 6, 4], ['2.tlu.delivery.mp.microsoft.com(1)', 6, 4],
  ['security.iqiyi.com(1)', 6, 4], ['cdn.jsdelivr.net(1)', 6, 4], ['retcode.alicdn.com(1)', 6, 3.5],
  ['113.54.150.70(5)', 3.5, 0, 'teal'], ['m801.music.126.net(1)', 4.5, 3], ['ff02::c(1)', 3, 0, 'purple'],
  ['p3.music.126.net(1)', 4.5, 3], ['p3.music.126.net(1)', 4.5, 3], ['avatar.csdnimg.cn(1)', 4, 2.5],
  ['ff02::1:3(4)', 3, 0, 'purple'], ['yjsjy.uestc.edu.cn(1)', 3, 2], ['220.194.95.218(1)', 3, 2],
  ['connc.gj.qq.com(1)', 3, 2], ['music.163.com(1)', 3, 2], ['121.51.77.100(1)', 3, 2],
  ['ns-strategy.cdn.bcebos.com(1)', 3, 2], ['182.254.63.105(1)', 3, 2], ['broadcast.chat.bilibili.com(1)', 3, 2],
  ['qvzh-952001.scanning-native.org(1)', 3, 2], ['puui.qpic.cn(1)', 3, 2], ['img2020.cnblogs.com(1)', 3, 2],
];

const rightNodes = [
  ['safebrowsing.googleapis.com(1)', 3, 1.8], ['p1.music.126.net(1)', 3, 1.8], ['api.bilibili.com(1)', 3, 2],
  ['119.141.247.127(1)', 3, 2], ['106.110.243.199(1)', 3.5, 2], ['121.51.191.195(1)', 3.5, 2],
  ['220.194.91.190(1)', 5, 3], ['mmbiz.qpic.cn(1)', 5, 3], ['106.75.188.26(1)', 3.5, 2],
  ['web-player-tracker.biliapi.net(1)', 4, 2], ['113.54.151.255(4)', 3.5, 0, 'purple'], ['224.0.0.252(6)', 3.5, 0, 'purple'],
  ['fe3cr.delivery.mp.microsoft.com(1)', 5, 3], ['upos-sz-mirrorcoso1.bilivideo.com(1)', 4.5, 3],
  ['shzjwxsns.video.qq.com(1)', 5, 3], ['fe80::a8df:b912:87c1:44b9(2)', 3.5, 0, 'teal'],
  ['2.tlu.dl.delivery.mp.microsoft.com(1)', 5, 3], ['121.51.91.236(1)', 4.5, 2.5],
  ['fe80::2ad1:27ff:fe08:a7e4(1)', 5, 0, 'green'], ['121.51.68.49(1)', 4.5, 3],
  ['2.tlu.dl.delivery.mp.microsoft.com(1)', 6, 4], ['2.tlu.dl.delivery.mp.microsoft.com(1)', 5.5, 3.5],
  ['cn-sccd-fx-bcache-04.bilivideo.com(1)', 6, 4], ['xsoscmcc.zhongzhuanserver.com(1)', 6, 4],
  ['2.tlu.dl.delivery.mp.microsoft.com(1)', 7.5, 5], ['2.tlu.dl.delivery.mp.microsoft.com(1)', 6, 4],
  ['2.tlu.dl.delivery.mp.microsoft.com(1)', 5.5, 3.5], ['2.tlu.dl.delivery.mp.microsoft.com(1)', 5.5, 3.5],
  ['upos-sz-mirrorkodo.bilivideo.com(1)', 5.5, 3.5], ['v-7319d363.71edge.com(1)', 6, 4],
  ['eportal.uestc.edu.cn(1)', 4.5, 3], ['182.254.110.90(1)', 5, 0, 'green'], ['153.37.1.222(1)', 4.5, 3],
  ['121.51.91.187(1)', 4, 3], ['ff02::fb(6)', 3.5, 0, 'purple'], ['239.255.255.250(10)', 3.5, 0, 'purple'],
  ['open.newday.me(1)', 3, 2], ['upos-sz-mirrorkodo.bilivideo.com(1)', 4.5, 3], ['broadcast.chat.bilibili.com(1)', 3, 2],
  ['api.github.com(1)', 4.5, 3], ['202.112.14.21(1)', 3, 2], ['p2.music.126.net(1)', 4.5, 3.5],
  ['p3.music.126.net(1)', 4, 3], ['39.104.93.79(1)', 3.5, 0, 'green'], ['safebrowsing.googleapis.com(1)', 3.5, 2],
  ['121.51.176.107(1)', 3.5, 2.5], ['sourcegraph.com(1)', 3, 2], ['cdn.theweeks.xyz(1)', 3, 2.5], ['i1.hdslb.com(1)', 3.5, 2.5],
  ['113.54.153.236(5)', 3, 0, 'teal'],
];

const CX = 1592;
const CY = 824;
const RX = 756;
const RY = 524;
const BLUE_SCALE = 1.35;

const pt = (side, k) => {
  const dy = 20 * k;
  return { x: CX + side * RX * Math.sqrt(1 - (dy / RY) ** 2), y: CY - dy };
};

const L = (k) => pt(-1, k);
const R = (k) => pt(1, k);
const HUB = L(0);

const dotFill = { purple: '#4a1fa4', teal: '#3cbca4', green: '#7ee000' };
const textFill = { purple: '#4a1fa8', teal: '#37b9a0', green: '#7ee000' };
const BLUE_LINE = '#25486f';
const BLUE_TEXT = '#203f66';

const redEdges = [
  [L(9), L(-8), 3], [L(9), R(-25), 1.6], [L(8), HUB, 2.2], [L(8), R(-10), 3], [L(8), L(-14), 3],
  [HUB, R(-11), 3], [L(-8), R(-11), 1.6], [R(-11), R(-25), 3], [R(13), R(-25), 1.6], [R(14), L(-8), 3],
  [R(13), L(-8), 3], [HUB, R(13), 1.6], [R(9), L(-10), 3], [HUB, L(-8), 2],
];

const greenEdges = [
  [HUB, L(5), 4], [L(6), R(6), 4], [HUB, R(-7), 4.5], [HUB, R(-19), 3],
];

const Edge = ({ a, b, c, w }) => <line x1={a.x} y1={a.y} x2={b.x} y2={b.y} stroke={c} strokeWidth={w} />;

function MatrixChart() {
  const all = [
    ...leftNodes.map((n, i) => ({ n, side: -1, k: 24 - i })),
    ...rightNodes.map((n, i) => ({ n, side: 1, k: 24 - i })),
  ].map((o) => ({ ...o, p: pt(o.side, o.k) }));
  return (
    <MatrixSvg>
      <g transform="translate(-628 -260)">
        <CanvasTitle x="1591" y="280">Top100 IP节点(默认)</CanvasTitle>
        {all.filter((o) => !o.n[3]).map((o, i) => (
          <Edge key={i} a={HUB} b={o.p} c={BLUE_LINE} w={o.n[2] * BLUE_SCALE} />
        ))}
        <ellipse cx={CX} cy={CY} rx={RX} ry={RY} fill="none" stroke="#0a90f0" strokeWidth="2.4" />
        {all.filter((o) => !o.n[3]).map((o, i) => (
          <circle key={i} cx={o.p.x} cy={o.p.y} r={o.n[1] * 1.1} fill={BLUE_LINE} />
        ))}
        {redEdges.map(([a, b, w], i) => (
          <Edge key={i} a={a} b={b} c="#e00000" w={w} />
        ))}
        {greenEdges.map(([a, b, w], i) => (
          <Edge key={i} a={a} b={b} c="#7ee000" w={w} />
        ))}
        {all.filter((o) => o.n[3]).map((o, i) => (
          <circle key={i} cx={o.p.x} cy={o.p.y} r={o.n[1]} fill={dotFill[o.n[3]]} />
        ))}
        {all.map((o, i) => (
          <NodeLabel
            key={i}
            x={o.p.x + o.side * 15}
            y={o.p.y + 4.5}
            textAnchor={o.side < 0 ? 'end' : 'start'}
            $c={o.n[3] ? textFill[o.n[3]] : BLUE_TEXT}
          >
            {o.n[0]}
          </NodeLabel>
        ))}
      </g>
    </MatrixSvg>
  );
}

const trafficSpikes = [
  [93, 2], [172, 2], [205, 4], [276, 20], [283, 33], [548, 21], [590, 5], [660, 20], [729, 20], [796, 10], [800, 19], [875, 16], [878, 30],
];

function TrafficChart() {
  return (
    <Svg w={905} h={82}>
      <rect width="905" height="82" fill="#000" />
      {Array.from({ length: 35 }, (_, i) => (
        <path key={i} d={`M${25.5 + i * 26} 0v82`} stroke="#00763c" />
      ))}
      {[20.5, 41, 62].map((y) => (
        <path key={y} d={`M0 ${y}h905`} stroke="#00763c" />
      ))}
      {trafficSpikes.map(([x, h]) => (
        <path key={x} d={`M${x - 6} 82L${x} ${82 - h}L${x + 5} 82z`} fill="#006a00" stroke="#00e000" />
      ))}
    </Svg>
  );
}

function Monitor() {
  return (
    <MonitorWidget>
      <Svg w={157} h={76}>
        <rect x="0" y="13" width="120" height="53" rx="26" fill="#2b3138" opacity="0.92" />
        <path d="M8 39h100" stroke="#3a424a" />
        <circle cx="111" cy="39" r="37" fill="#3a434d" />
        <path d="M111 8a31 31 0 0 1 0 62" fill="none" stroke="url(#monarc)" strokeWidth="2.5" />
        <defs>
          <linearGradient id="monarc" x1="0" y1="0" x2="0" y2="1">
            <stop offset="0" stopColor="#30c0b0" />
            <stop offset="1" stopColor="#c8d040" />
          </linearGradient>
        </defs>
        <path d="M18 25l4 4h-2.5v5h-3v-5H14z" fill="#2aa0e0" />
        <path d="M18 58l4-4h-2.5v-5h-3v5H14z" fill="#3cb040" />
        <MonitorSmall x="40" y="31">0</MonitorSmall>
        <MonitorUnit x="50" y="31">K/s</MonitorUnit>
        <MonitorSmall x="40" y="59">0</MonitorSmall>
        <MonitorUnit x="50" y="59">K/s</MonitorUnit>
        <MonitorPct x="88" y="50">50</MonitorPct>
        <MonitorPctSign x="123" y="50">%</MonitorPctSign>
        <rect x="138" y="0" width="18" height="20" fill="#f4f4f4" stroke="#9ab0c8" />
        <path d="M141 5h12M141 9h12M141 13h6" stroke="#5a7aa0" />
        <rect x="148" y="12" width="5" height="5" fill="#e8a020" />
      </Svg>
    </MonitorWidget>
  );
}

function Tree() {
  return treeRows.map((r, i) => {
    const lines = ancestorLines(i);
    const last = !hasNext(i);
    return (
      <TreeRow key={i} $c={r.c}>
        {lines.map((on, l) => (
          <Guide key={l} $on={on} />
        ))}
        <Connector $last={last}>
          {(r.open || r.plus) && <Expander $plus={r.plus} />}
        </Connector>
        <TreeIcons>
          {r.kind === 'pipe' && <PipeIcon c={r.col[0]} s={r.col[1]} double={r.dbl} />}
          {r.kind === 'folder' && <FolderIcon dim={r.dim} net={r.net} open={r.folderOpen} />}
          {r.kind === 'pc' && <PcIcon dim={r.dim} globe={r.globe} />}
          {r.kind === 'flag' && <CnFlag />}
          {r.kind === 'card' && (
            <Svg w={16} h={15}>
              <path d="M1 2h14v9H8v3H5v-3H1z" fill="#2fa040" stroke="#14602a" strokeWidth="0.7" />
              <path d="M4 4h2v2H4zM9 4h2v2H9zM4 8h2v2H4z" fill="#f0e060" />
            </Svg>
          )}
          {r.kind === 'ipnet' && (
            <Svg w={16} h={15}>
              <rect x="0" y="1" width="8" height="6" fill="#3f8ad0" />
              <rect x="8" y="6" width="8" height="5" fill="#6a9ac8" />
              <path d="M0 13h16" stroke="#4aa050" strokeWidth="2" />
              <path d="M4 7v5M12 11v2" stroke="#4aa050" />
            </Svg>
          )}
          {(r.up || r.down) && <Arrows up={r.up} down={r.down} />}
        </TreeIcons>
        {r.name}
      </TreeRow>
    );
  });
}

export default function App() {
  return (
    <Page>
      <GlobalStyle />
      <LogoOrb>
        <Svg w={28} h={28}>
          <path d="M5 11c3-6 11-8 17-5-5-1-11 0-12 4-1 3 5 3 9 5 4 2 5 6 2 8-4 3-11 3-16-1 5 2 11 2 13-1 1-3-4-4-8-5-4-1-6-3-5-5z" fill="#fff" />
        </Svg>
      </LogoOrb>
      <TitleBar>
        <QuickAccess>
          <Svg w={14} h={19}><path d="M1 1h8l4 4v13H1z" fill="#fff" stroke="#50607a" /></Svg>
          <Svg w={17} h={21}><rect x="1" y="3" width="13" height="17" fill="#e4a878" stroke="#7a6048" /><rect x="4" y="1" width="7" height="4" fill="#c8ccd0" /><circle cx="11" cy="15" r="4" fill="#5a90b8" /></Svg>
          <Svg w={17} h={19}><path d="M1 4h6l1 2h8v12H1z" fill="#f0c050" stroke="#a08030" /></Svg>
          <Svg w={17} h={19}><rect x="1" y="1" width="15" height="17" fill="#5a54b0" /><rect x="4" y="1" width="9" height="7" fill="#f4f4f4" /><rect x="5" y="11" width="7" height="7" fill="#333" /></Svg>
          <Svg w={17} h={20}><rect x="1" y="1" width="15" height="17" fill="#f4f6fa" stroke="#5a6a88" /><rect x="1" y="1" width="15" height="4" fill="#5a7ab0" /><path d="M4 12l3 3 5-7" stroke="#d03020" strokeWidth="1.5" fill="none" /></Svg>
        </QuickAccess>
        <TitleText>分析工程 1 - 科来网络分析系统 2020 技术交流版</TitleText>
        <WindowButtons>
          <Svg w={14} h={14}><path d="M1 8h12" stroke="#111" /></Svg>
          <Svg w={12} h={14}><rect x="0.5" y="3.5" width="8" height="10" fill="#fff" stroke="#111" /><path d="M3 3V1h8v10H9" fill="none" stroke="#111" /></Svg>
          <Svg w={14} h={14}><path d="M1 0l12 14M13 0L1 14" stroke="#111" /></Svg>
        </WindowButtons>
      </TitleBar>

      <TabRow>
        {ribbonTabs.map(([t, w, a]) => (
          <RibbonTab key={t} $w={w} $active={a}>{t}</RibbonTab>
        ))}
        <HelpBox>
          <Svg w={24} h={24}>
            <circle cx="12" cy="12" r="11" fill="#3a7cd0" stroke="#b4c4d8" strokeWidth="2" />
            <path d="M8 9c0-5 8-5 8 0 0 3-4 3-4 6" fill="none" stroke="#fff" strokeWidth="2.4" />
            <circle cx="12" cy="19" r="1.6" fill="#fff" />
          </Svg>
          帮助
          <Caret />
        </HelpBox>
      </TabRow>

      <Ribbon>
        <RibbonGroup $w={212}>
          <GroupBody>
            <RibbonItem $w={88}><ItemIcon><AdapterIcon /></ItemIcon><ItemLabel>网络适配器</ItemLabel></RibbonItem>
            <RibbonSep />
            <RibbonItem $w={61} $off><ItemIcon><PlayIcon /></ItemIcon><ItemLabel>开始</ItemLabel></RibbonItem>
            <RibbonItem $w={60}><ItemIcon><StopIcon /></ItemIcon><ItemLabel>停止</ItemLabel></RibbonItem>
          </GroupBody>
          <GroupLabel>捕捉</GroupLabel>
        </RibbonGroup>
        <RibbonGroup $w={887}>
          <GroupBody>
            <RibbonItem $w={72}><ItemIcon><MoleculeIcon /></ItemIcon><ItemLabel>分析对象</ItemLabel></RibbonItem>
            <RibbonItem $w={52}><ItemIcon><DocCrossIcon /></ItemIcon><ItemLabel>诊断</ItemLabel></RibbonItem>
            <RibbonItem $w={70}><ItemIcon><ViewIcon /></ItemIcon><ItemLabel>视图显示</ItemLabel></RibbonItem>
            <RibbonItem $w={62}><ItemIcon><NodeGroupIcon /></ItemIcon><ItemLabel>节点分组</ItemLabel></RibbonItem>
            <RibbonItem $w={64}><ItemIcon><NameTableIcon /></ItemIcon><ItemLabel>名字表</ItemLabel></RibbonItem>
            <RibbonSep />
            <RibbonItem $w={114}><ItemIcon><BeakerIcon /></ItemIcon><ItemLabel>数据包显示缓存</ItemLabel></RibbonItem>
            <RibbonItem $w={54}><ItemIcon><FunnelIcon /></ItemIcon><ItemLabel>过滤器</ItemLabel></RibbonItem>
            <RibbonItem $w={84}><ItemIcon><BeakerIcon save /></ItemIcon><ItemLabel>数据包保存</ItemLabel></RibbonItem>
            <RibbonSep />
            <RibbonItem $w={85}><ItemIcon><SessionFilterIcon /></ItemIcon><ItemLabel>会话筛选器</ItemLabel></RibbonItem>
            <RibbonSep />
            <RibbonItem $w={62}><ItemIcon><LogIcon /></ItemIcon><ItemLabel>日志</ItemLabel></RibbonItem>
            <RibbonItem $w={97}><ItemIcon><LogSaveIcon /></ItemIcon><ItemLabel>日志文件保存</ItemLabel></RibbonItem>
            <RibbonSep />
            <RibbonItem $w={62}><ItemIcon><WarnIcon /></ItemIcon><ItemLabel>警报</ItemLabel></RibbonItem>
          </GroupBody>
          <GroupLabel>分析设置</GroupLabel>
        </RibbonGroup>
        <RibbonGroup $w={72}>
          <GroupBody>
            <RibbonItem $w={70}><ItemIcon><ShieldIcon /></ItemIcon><ItemLabel>威胁情报</ItemLabel></RibbonItem>
          </GroupBody>
          <GroupLabel>高级分析</GroupLabel>
        </RibbonGroup>
        <RibbonGroup $w={107}>
          <GroupBody>
            <GaugeBox>
              <Gauge title="Utilization" ticks={[['0', 17, 46], ['20', 23, 28], ['40', 38, 18], ['60', 60, 18], ['80', 75, 28], ['100', 81, 46]]} />
            </GaugeBox>
          </GroupBody>
          <GroupLabel>利用率 (0%)</GroupLabel>
        </RibbonGroup>
        <RibbonGroup $w={106}>
          <GroupBody>
            <GaugeBox>
              <Gauge title="Packet/s" ticks={[['0', 17, 46], ['10K', 27, 28], ['50K', 49, 18], ['100K', 72, 28], ['200K', 81, 46]]} />
            </GaugeBox>
          </GroupBody>
          <GroupLabel>每秒数据包 (4)</GroupLabel>
        </RibbonGroup>
        <RibbonGroup $w={912}>
          <GroupBody>
            <ChartBox><TrafficChart /></ChartBox>
          </GroupBody>
          <GroupLabel>流量趋势图（位）</GroupLabel>
        </RibbonGroup>
        <RibbonGroup $w={223}>
          <GroupBody>
            <BufferWrap>
              <BufferGrid>
                <BufferDots />
                <BufferPct>100%</BufferPct>
              </BufferGrid>
              <BufferActions>
                <BufferAction><BufferActionIcon kind="save" />导出</BufferAction>
                <BufferAction><BufferActionIcon kind="clear" />清空</BufferAction>
                <BufferAction><BufferActionIcon kind="lock" />锁定</BufferAction>
              </BufferActions>
            </BufferWrap>
          </GroupBody>
          <GroupLabel>数据包缓存 (520.0 MB)</GroupLabel>
        </RibbonGroup>
      </Ribbon>

      <Workspace>
        <LeftPanel>
          <PanelHeader>节点浏览器</PanelHeader>
          <PanelTools>
            <ToolIcon kind="grid" />
            <ToolIcon kind="funnel" />
            <ToolIcon kind="pie" />
            <ToolIcon kind="warn" />
            <ToolIcon kind="report" />
          </PanelTools>
          <TreeArea>
            <TreeColumn>
              <SessionRow>
                <Svg w={14} h={18}><ellipse cx="7" cy="9" rx="6.5" ry="8.5" fill="#4c80b8" stroke="#c8d4e0" /><path d="M9 5a4 4 0 1 0 0 8" fill="none" stroke="#fff" strokeWidth="1.5" /></Svg>
                实时分析 - 默认
              </SessionRow>
              <Tree />
            </TreeColumn>
            <Scrollbar $w={20}>
              <ScrollCap $h={22}><Chevron /></ScrollCap>
              <ScrollThumb $h={515} />
              <ScrollRest />
              <ScrollCap $h={22}><Chevron down /></ScrollCap>
            </Scrollbar>
          </TreeArea>
        </LeftPanel>

        <MainPane>
          <TabStrip>
            {docTabs.map(([t, w, s]) => (
              <DocTab key={t} $w={w} $slant={s}>{t}</DocTab>
            ))}
            <DocTab $w={78} $active>矩阵<TabClose>×</TabClose></DocTab>
            {docTabsAfter.map(([t, w]) => (
              <DocTab key={t} $w={w}>{t}</DocTab>
            ))}
          </TabStrip>
          <MainTools>
            <Svg w={14} h={22}>
              <path d="M7 1l7 8h-4v6H4V9H0z" fill="#28b030" />
              <path d="M1 17h12M1 20h12" stroke="#8898a8" />
            </Svg>
            <ToolLabel>矩阵选择</ToolLabel>
            <Caret $m="0 5px 0 8px" />
            <ToolSep $m="0 5px 0 0" />
            <Svg w={14} h={20}>
              <path d="M1 16L5 2h2l2 14" fill="none" stroke="#a060c0" strokeWidth="2" />
              <path d="M4 18L8 4h1l4 14" fill="none" stroke="#3a70c0" strokeWidth="2.5" />
            </Svg>
            <Caret $m="0 7px 0 2px" />
            <Svg w={16} h={18}>
              <rect x="1" y="1" width="12" height="16" fill="#fbfbf4" stroke="#909090" />
              <circle cx="10" cy="12" r="5.5" fill="#e8b448" stroke="#a07820" />
            </Svg>
            <ToolSep $m="0 7px 0 5px" />
            <Svg w={14} h={18}>
              <g fill="none" stroke="#2f7ad8" strokeWidth="2.4">
                <path d="M2 8a5 5 0 0 1 9-3" />
                <path d="M12 10a5 5 0 0 1-9 3" stroke="#1e5ab0" />
              </g>
              <path d="M13 1v6H7z" fill="#2f7ad8" />
              <path d="M1 17v-6h6z" fill="#1e5ab0" />
            </Svg>
            <Caret $m="0 0 0 7px" />
          </MainTools>
          <MainBody>
            <SideColumn>
              <SideTools>
                <MiniMatrix badge="#60b060" />
                <MiniMatrix badge="#f0c850" />
                <MiniMatrix badge="#d86030" />
                <MiniMatrix badge="#20a0e0" />
              </SideTools>
              <MatrixList>
                {matrixItems.map((t, i) => (
                  <MatrixItem key={t} $on={i === 3}>
                    <MatrixIcon />
                    <MatrixLabel>{t}</MatrixLabel>
                  </MatrixItem>
                ))}
              </MatrixList>
              <SideSep />
              <PanelHeader $pl={8}>用户隐藏的节点(0)</PanelHeader>
              <HiddenArea />
              <SideSep />
              <PanelHeader $pl={8}>未显示的节点(497)</PanelHeader>
              <RestList>
                <RestRows>
                  {restNodes.map((t, i) => (
                    <RestRow key={i}>{t}</RestRow>
                  ))}
                </RestRows>
                <Scrollbar $w={19}>
                  <ScrollCap $h={21}><Chevron /></ScrollCap>
                  <ScrollThumb $h={21} />
                  <ScrollRest />
                  <ScrollCap $h={21}><Chevron down /></ScrollCap>
                </Scrollbar>
              </RestList>
            </SideColumn>
            <Gutter />
            <CanvasWrap>
              <MatrixChart />
            </CanvasWrap>
          </MainBody>
        </MainPane>
        <Monitor />
      </Workspace>

      <StatusBar>
        <StatusItem $w={146} $pl={8}><Svg w={15} h={15}><rect x="1" y="2" width="13" height="12" fill="#e8eef8" stroke="#5070a8" /><rect x="3" y="5" width="6" height="2" fill="#d04030" /></Svg>实时分析 - 默认</StatusItem>
        <StatusItem $w={83} $pl={9}><Svg w={15} h={12}><rect x="0" y="3" width="15" height="9" fill="#3a9040" /></Svg>以太网</StatusItem>
        <StatusItem $w={152} $pl={11}><Svg w={15} h={15}><path d="M4 2h10v8H4z" fill="#dce4ee" stroke="#607080" /><path d="M1 6h9v8H1z" fill="#eef2f6" stroke="#607080" /></Svg>带宽 - 1000Mbps</StatusItem>
        <StatusItem $w={85} $pl={8}><Svg w={15} h={14}><path d="M0 1h15L9 8v6H6V8z" fill="#b0bcc8" /></Svg>未启用</StatusItem>
        <StatusItem $w={65} $pl={2}>04:10:17</StatusItem>
        <StatusItem $w={132} $pl={10}><Svg w={15} h={14}><path d="M0 1h15L9 8v6H6V8z" fill="#b0bcc8" /><path d="M9 8l3 3 3-5" stroke="#30a030" fill="none" strokeWidth="1.4" /></Svg>1,518,929<Svg w={14} h={14}><path d="M0 1h14L8 8v6H6V8z" fill="#b0bcc8" /><circle cx="10" cy="10" r="3.6" fill="none" stroke="#e03020" strokeWidth="1.4" /></Svg>0</StatusItem>
        <StatusItem $pl={5} $plain>就绪</StatusItem>
        <StatusItem $ml="auto" $pr={8} $gap={3}>
          <Svg w={14} h={14}><path d="M7 0l7 14H0z" fill="#f0d830" stroke="#a89018" strokeWidth="0.6" /></Svg>
          警报浏览器
        </StatusItem>
        <StatusItem $plain $w={59} $pl={9} $gap={4}><Bulb />0</StatusItem>
        <StatusItem $plain $w={50} $pl={1} $gap={4}><Bulb />0</StatusItem>
        <StatusItem $plain $w={38} $gap={4}><Bulb />0</StatusItem>
      </StatusBar>
    </Page>
  );
}
